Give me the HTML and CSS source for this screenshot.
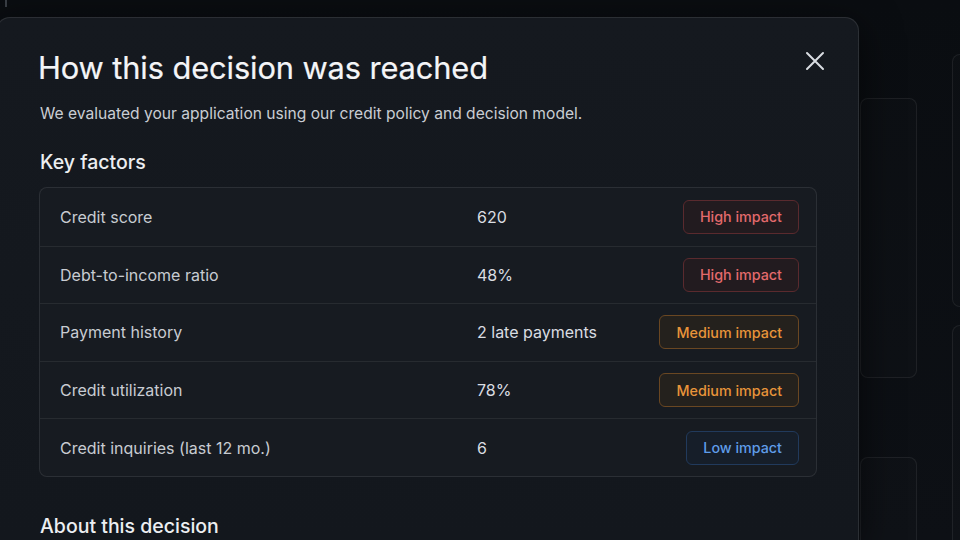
FILE: index.html
```html
<!DOCTYPE html>
<html lang="en">
<head>
<meta charset="utf-8">
<title>How this decision was reached</title>
<link rel="stylesheet" href="styles.css">
</head>
<body>
<div class="page">
  <div class="tick"></div>
  <div class="bg-col bg-col-a">
    <div class="bg-card card-a1"></div>
    <div class="bg-card card-a2"></div>
  </div>
  <div class="bg-col bg-col-b">
    <div class="bg-card card-b1"></div>
    <div class="bg-card card-b2"></div>
  </div>
</div>

<section class="modal" role="dialog" aria-labelledby="modal-title">
  <header class="modal-head">
    <h1 id="modal-title" class="modal-title">How this decision was reached</h1>
    <button class="close" aria-label="Close">
      <svg width="20" height="20" viewBox="0 0 20 20" fill="none" stroke="currentColor" stroke-width="2" stroke-linecap="round">
        <path d="M2 2 L18 18 M18 2 L2 18"/>
      </svg>
    </button>
  </header>
  <p class="modal-sub">We evaluated your application using our credit policy and decision model.</p>

  <h2 class="section-title">Key factors</h2>
  <div class="factors">
    <div class="row">
      <span class="label">Credit score</span>
      <span class="value">620</span>
      <span class="badge high">High impact</span>
    </div>
    <div class="row">
      <span class="label">Debt-to-income ratio</span>
      <span class="value">48%</span>
      <span class="badge high">High impact</span>
    </div>
    <div class="row">
      <span class="label">Payment history</span>
      <span class="value">2 late payments</span>
      <span class="badge medium">Medium impact</span>
    </div>
    <div class="row">
      <span class="label">Credit utilization</span>
      <span class="value">78%</span>
      <span class="badge medium">Medium impact</span>
    </div>
    <div class="row">
      <span class="label">Credit inquiries (last 12 mo.)</span>
      <span class="value">6</span>
      <span class="badge low">Low impact</span>
    </div>
  </div>

  <h2 class="section-title about">About this decision</h2>
</section>
</body>
</html>
```

FILE: styles.css
```css
* { box-sizing: border-box; }

html, body {
  margin: 0;
  padding: 0;
  width: 960px;
  height: 540px;
  overflow: hidden;
  background: #0b0e12;
  font-family: Inter, "Noto Sans", "Liberation Sans", sans-serif;
}

.page {
  position: relative;
  width: 960px;
  height: 540px;
  display: flex;
  overflow: hidden;
  background: linear-gradient(180deg, #0a0d11 0%, #0d1015 100%);
}

.tick {
  position: absolute;
  left: 5px;
  top: 0;
  width: 2px;
  height: 7px;
  background: #3a3f46;
}

.bg-col {
  display: flex;
  flex-direction: column;
  flex-shrink: 0;
}

.bg-col-a {
  margin-left: 860px;
  width: 57px;
  padding-top: 98px;
  gap: 79px;
}

.bg-col-b {
  margin-left: 35px;
  width: 40px;
  padding-top: 54px;
  gap: 18px;
}

.bg-card {
  flex-shrink: 0;
  border: 1px solid rgba(255, 255, 255, 0.07);
  border-radius: 8px;
  background: rgba(255, 255, 255, 0.01);
}

.card-a1 { height: 280px; }
.card-a2 { height: 200px; }
.card-b1 { height: 253px; }
.card-b2 { height: 300px; }

.modal {
  position: absolute;
  left: -4px;
  top: 17px;
  width: 863px;
  height: 523px;
  overflow: hidden;
  padding: 28px 0 0 42px;
  background: linear-gradient(180deg, #15191f 0%, #13171d 100%);
  border: 1px solid rgba(255, 255, 255, 0.1);
  border-bottom: 0;
  border-radius: 14px 14px 0 0;
  box-shadow: 0 10px 40px rgba(0, 0, 0, 0.6);
  color: #e6e8eb;
}

.modal-head {
  display: flex;
  align-items: flex-start;
  justify-content: space-between;
  padding-right: 33px;
}

.modal-title {
  margin: 0 0 0 -1px;
  font-size: 30.8px;
  font-weight: 400;
  letter-spacing: -0.1px;
  line-height: 44px;
  color: #f4f5f7;
  -webkit-text-stroke: 0.2px #f4f5f7;
}

.close {
  margin-top: 5px;
  width: 20px;
  height: 20px;
  padding: 0;
  border: 0;
  background: none;
  color: #d9dde2;
  display: flex;
}

.modal-sub {
  margin: 13px 0 0 1px;
  font-size: 15.6px;
  line-height: 22px;
  color: #c9cdd3;
}

.section-title {
  margin: 24px 0 0 1px;
  font-size: 19.5px;
  font-weight: 500;
  line-height: 26px;
  color: #eceef1;
}

.factors {
  margin: 12px 0 0 0;
  width: 778px;
  border: 1px solid rgba(255, 255, 255, 0.09);
  border-radius: 8px;
  background: #171b21;
  overflow: hidden;
}

.row {
  display: grid;
  grid-template-columns: 417px 1fr auto;
  align-items: center;
  height: 57.6px;
  padding: 0 17px 0 20px;
  border-top: 1px solid rgba(255, 255, 255, 0.07);
  font-size: 16px;
}

.row:first-child { border-top: 0; }

.label { color: #c8ccd2; }
.value { color: #dadde1; }

.badge {
  height: 34px;
  padding: 0 16px;
  border-radius: 6px;
  border: 1px solid;
  display: flex;
  align-items: center;
  font-size: 14.3px;
  font-weight: 500;
}

.badge.high {
  color: #e36a6c;
  border-color: #5a2a2e;
  background: #221b1f;
}

.badge.medium {
  color: #e8943a;
  border-color: #6a4722;
  background: #24211d;
}

.badge.low {
  color: #5f9ce8;
  border-color: #213a5c;
  background: #161e29;
}

.section-title.about {
  margin-top: 36px;
}
```
